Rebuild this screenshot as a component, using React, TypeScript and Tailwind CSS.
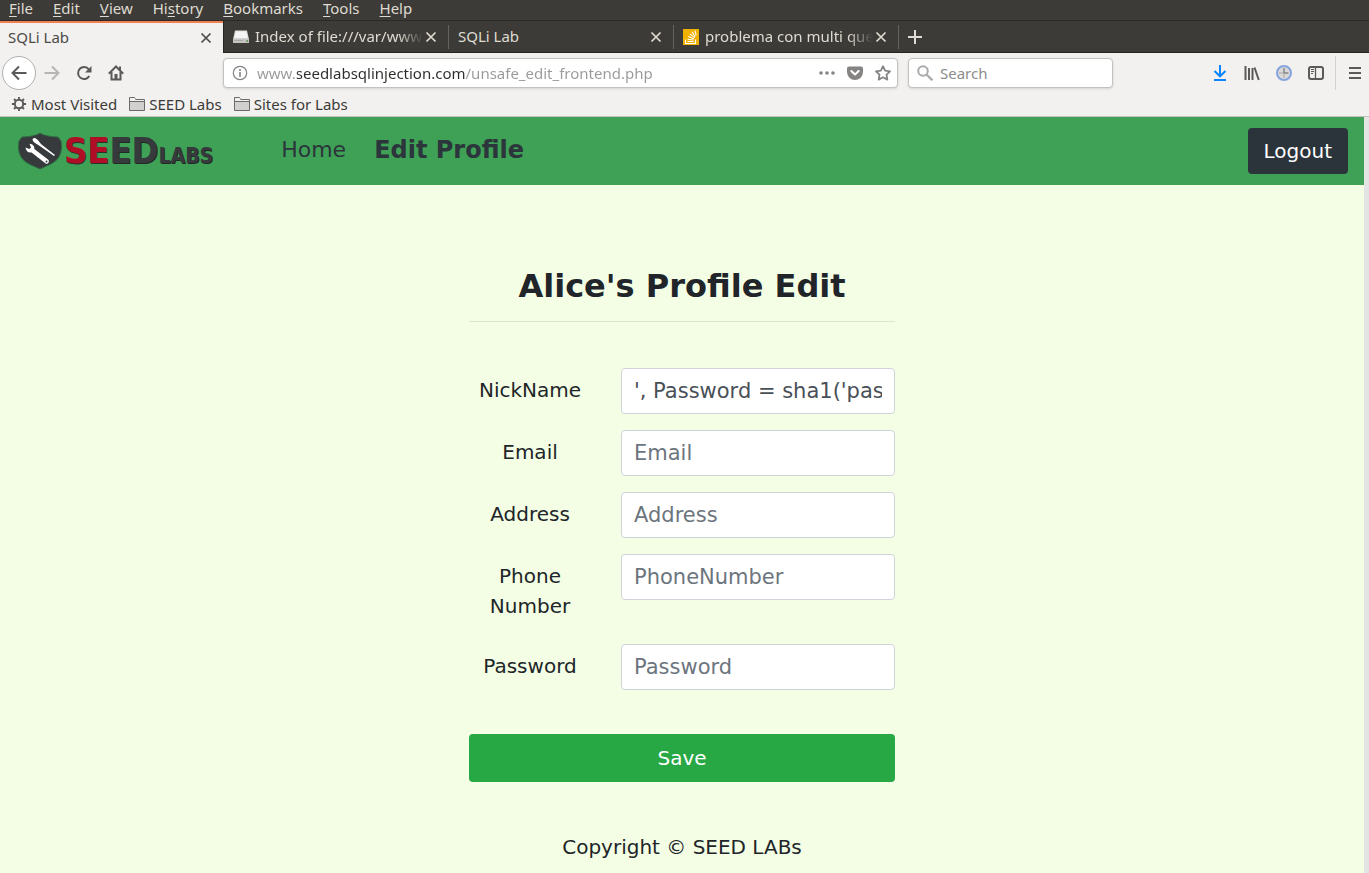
import React from "react";

const chromeFont = "font-['Noto_Sans','Open_Sans',sans-serif]";
const pageFont = "font-['DejaVu_Sans',Verdana,sans-serif]";

const menus: [string, string, string][] = [
  ["", "F", "ile"],
  ["", "E", "dit"],
  ["", "V", "iew"],
  ["Hi", "s", "tory"],
  ["", "B", "ookmarks"],
  ["", "T", "ools"],
  ["", "H", "elp"],
];

const fields = [
  { id: "NickName", label: "NickName", value: "', Password = sha1('password') where name='Alice'#" },
  { id: "Email", label: "Email", value: "" },
  { id: "Address", label: "Address", value: "" },
  { id: "PhoneNumber", label: "Phone Number", value: "" },
  { id: "Password", label: "Password", value: "" },
];

function Svg({ children, size = 16, className = "" }: { children: React.ReactNode; size?: number; className?: string }) {
  return (
    <svg
      width={size}
      height={size}
      viewBox="0 0 16 16"
      fill="none"
      stroke="currentColor"
      strokeWidth="2"
      className={`shrink-0 ${className}`}
      aria-hidden="true"
    >
      {children}
    </svg>
  );
}

function CloseIcon() {
  return (
    <Svg>
      <path d="M3.5 3.5l9 9M12.5 3.5l-9 9" strokeWidth="1.7" />
    </Svg>
  );
}

function DriveIcon() {
  return (
    <Svg>
      <path d="M2 1.500h12l2 9H0z" fill="#dededc" stroke="none" />
      <path d="M3 2.500h10l1.500 6.500H1.500z" fill="#f4f4f4" stroke="none" />
      <path d="M0 9.500h16V14H0z" fill="#c4c4c2" stroke="none" />
      <path d="M1 11.5h9" stroke="#aaa" strokeWidth="1" />
      <path d="M13 12h2" stroke="#5f8f53" strokeWidth="1.5" />
    </Svg>
  );
}

function StackIcon() {
  return (
    <Svg>
      <path d="M0 0h16v16H0z" fill="#f0b000" stroke="none" />
      <path
        d="M2.5 10.5v4h10v-4M4.5 12.5h6M4.6 10.2l6 .8M5.2 7.6l5.6 2.2M6.8 4.9l4.8 3.7M9 2.7l3.2 4.9M12 1.4l1.2 5"
        stroke="#fff"
        strokeWidth="1.1"
      />
    </Svg>
  );
}

function FolderIcon() {
  return (
    <Svg>
      <path d="M.5 14.500v-13h5l1 2h9v11z" fill="#d2d0ce" stroke="#6b6a68" strokeWidth="1" strokeLinejoin="round" />
      <path d="M1 2h4.500l1 2H15v1.500H1z" fill="#f2f1ef" stroke="none" />
      <path d="M1 5.500h14" stroke="#6b6a68" strokeWidth="1" />
    </Svg>
  );
}

function Tab({ title, icon }: { title: string; icon?: React.ReactNode }) {
  return (
    <div className="flex h-8 w-[225px] shrink-0 items-center pl-[9px]">
      {icon}
      <button
        className={`${icon ? "ml-1.5" : ""} min-w-0 flex-1 overflow-hidden pb-0.5 text-left whitespace-nowrap ${
          title.length > 10 ? "mask-r-from-85% mask-r-to-100%" : ""
        }`}
      >
        {title}
      </button>
      <button aria-label={`Close ${title}`} className="mr-[9px]">
        <CloseIcon />
      </button>
      <span className="h-6 w-px bg-[#66645f]" />
    </div>
  );
}

function Logo() {
  return (
    <a href="#home" className="flex items-center" aria-label="SEED Labs">
      <svg width="46" height="38" viewBox="0 0 46 38" aria-hidden="true">
        <path
          d="M22 1c4 2.500 10 3.800 18 4l3 4c1.200 6.500.5 13-3.500 18C35.500 32 28 34 22 37 16 34 8.500 32 4.500 27 .5 22-.2 15.500 1 9l3-4C12 4.800 18 3.500 22 1z"
          fill="#373a3c"
          stroke="#2f6b43"
          strokeWidth="1"
        />
        <path
          d="M15 6.500c1.500-1.500 3.500 0 5 1.800l3.200 3.900L37 23l-1 1-14.200-10-4-2.400c-2-1.200-4-3.600-2.800-5.100z"
          fill="#fff"
        />
        <path
          d="M7.500 15.500l4 1.500 1.500-1.500-1.500-3.700c3.300.2 5.200 2.600 4.800 5.200L30 27.500c1.500 1.300 1 3.800-1 4.200-.8.2-1.500-.1-2-.6L13.600 20.400c-3 .8-5.700-1.300-6.100-4.900z"
          fill="#fff"
        />
        <circle cx="28.500" cy="29.500" r="1" fill="#373a3c" />
      </svg>
      <span className="flex items-baseline pt-1 font-['DejaVu_Sans_Condensed','DejaVu_Sans',sans-serif] font-bold leading-9 text-[#373a3c]">
        <span className="text-[36px] text-[#b00d26] [text-shadow:1px_1px_0_#26332b]">SE</span>
        <span className="text-[36px] [text-shadow:1px_1px_0_#1f2a24]">ED</span>
        <span className="text-[21px] [text-shadow:1px_1px_0_#1f2a24]">LABS</span>
      </span>
    </a>
  );
}

function BrowserChrome() {
  return (
    <div className={`${chromeFont} text-[15px] leading-5 text-[#3c3b37]`}>
      <nav className="flex h-5 items-center gap-5 bg-[#3d3b37] pb-1 pl-[9px] text-[#dfdbd2]">
        {menus.map(([before, key, after]) => (
          <button key={before + key + after} className="whitespace-nowrap">
            {before}
            <span className="underline underline-offset-2">{key}</span>
            {after}
          </button>
        ))}
      </nav>

      <div className="flex h-[33px] items-stretch border-t border-[#2b2a27] bg-[#3d3b37] text-[#dfdbd2]">
        <div className="flex w-[223px] shrink-0 items-center justify-between border-t-2 border-[#f08050] bg-[#f2f1ef] pr-[9px] pl-2 text-[#4c4b48]">
          <button className="pb-0.5">SQLi Lab</button>
          <button aria-label="Close SQLi Lab">
            <CloseIcon />
          </button>
        </div>
        <div className="flex min-w-0 flex-1 items-center border-b border-l border-[#252420]">
          <Tab title="Index of file:///var/www/SQL" icon={<DriveIcon />} />
          <Tab title="SQLi Lab" />
          <Tab title="problema con multi query" icon={<StackIcon />} />
          <button aria-label="New tab" className="ml-2">
            <Svg>
              <path d="M8 1v14M1 8h14" />
            </Svg>
          </button>
        </div>
      </div>

      <div className="flex h-10 items-center bg-[#f2f1ef] text-[#5b5a58]">
        <div className="flex w-[223px] shrink-0 items-center pl-0.5">
          <button
            aria-label="Back"
            className="flex size-[34px] items-center justify-center rounded-full border border-[#b0afad] bg-white"
          >
            <Svg>
              <path d="M15.500 8H1.500M8 1.500L1.500 8 8 14.500" />
            </Svg>
          </button>
          <button aria-label="Forward" className="ml-2 text-[#b6b5b3]">
            <Svg>
              <path d="M.5 8h14M8 1.500L14.500 8 8 14.500" />
            </Svg>
          </button>
          <button aria-label="Reload" className="ml-4">
            <Svg>
              <path d="M13.300 11A6 6 0 1 1 12.800 4.300" />
              <path d="M15.500 1v6.500H9z" fill="currentColor" stroke="none" />
            </Svg>
          </button>
          <button aria-label="Home page" className="ml-4">
            <Svg>
              <path d="M.8 8.700L8 1.500l7.200 7.200" />
              <path d="M3.500 7v7.500h9V7" />
              <path d="M6.500 9h3v5.500h-3z" fill="currentColor" stroke="none" />
              <path d="M11 1.500h2v4l-2-2z" fill="currentColor" stroke="none" />
            </Svg>
          </button>
        </div>

        <div className="flex h-[30px] min-w-0 flex-1 items-center rounded border border-[#c4c2bf] bg-white px-2 text-[#858483] shadow-sm">
          <Svg>
            <circle cx="8" cy="8" r="6.700" strokeWidth="1.200" />
            <path d="M8 7v5M8 4v2" strokeWidth="1.600" />
          </Svg>
          <input
            aria-label="Address bar"
            defaultValue="www.seedlabsqlinjection.com/unsafe_edit_frontend.php"
            className="ml-[9px] min-w-0 flex-1 bg-[linear-gradient(to_right,#999_40px,#2e2d2b_40px,#2e2d2b_209px,#999_209px)] bg-clip-text text-transparent outline-none"
          />
          <button aria-label="Page actions">
            <Svg>
              <circle cx="2" cy="8" r="1.800" fill="currentColor" stroke="none" />
              <circle cx="8" cy="8" r="1.800" fill="currentColor" stroke="none" />
              <circle cx="14" cy="8" r="1.800" fill="currentColor" stroke="none" />
            </Svg>
          </button>
          <button aria-label="Save to Pocket" className="ml-3">
            <Svg>
              <path d="M2 1.500h12a2 2 0 0 1 2 2V7A8 8 0 0 1 0 7V3.500a2 2 0 0 1 2-2z" fill="currentColor" stroke="none" />
              <path d="M4.300 6L8 9.500 11.700 6" stroke="#fff" strokeLinecap="round" strokeLinejoin="round" />
            </Svg>
          </button>
          <button aria-label="Bookmark this page" className="-mr-0.5 ml-3">
            <Svg>
              <path
                d="M8 1.200l2.100 4.400 4.900.7-3.500 3.400.8 4.900L8 12.300l-4.300 2.300.8-4.900L1 6.300l4.900-.7z"
                strokeWidth="1.800"
                strokeLinejoin="round"
              />
            </Svg>
          </button>
        </div>

        <div className="ml-2.5 flex h-[30px] w-[205px] shrink-0 items-center rounded border border-[#c4c2bf] bg-white pl-2 text-[#aaa] shadow-sm">
          <Svg>
            <circle cx="6" cy="6" r="4.800" />
            <path d="M9.500 9.500L15.300 15.300" strokeWidth="2.300" />
          </Svg>
          <input
            aria-label="Search"
            placeholder="Search"
            className="ml-[7px] min-w-0 flex-1 text-[#3c3b37] outline-none placeholder:text-[#8d8c8a]"
          />
        </div>

        <div className="ml-[99px] flex shrink-0 items-center gap-4">
          <button aria-label="Downloads" className="text-[#0a84ff]">
            <Svg>
              <path d="M8 0v11M2.500 6L8 11.300 13.500 6M2 15h12" />
            </Svg>
          </button>
          <button aria-label="Library">
            <Svg>
              <path d="M1.500 1v14M5 3v12M8.500 3v12" />
              <path d="M10.500 2.500L14.800 15" />
            </Svg>
          </button>
          <button aria-label="Clock add-on">
            <Svg>
              <circle cx="8" cy="8" r="7" fill="#d9d9d8" stroke="#86a4df" />
              <path d="M8 3v10M3 8h10" stroke="#a8a8a8" strokeWidth="1" />
              <path d="M8 3v5h4" stroke="#777" strokeWidth="1" />
            </Svg>
          </button>
          <button aria-label="Sidebars">
            <Svg>
              <rect x="1" y="2" width="14" height="12" rx="2" />
              <path d="M7.500 2v12" strokeWidth="1.300" />
              <path d="M3 4.500h3M3 6.500h3M3 8.500h2" strokeWidth="1" />
            </Svg>
          </button>
        </div>
        <span className="ml-[11px] h-[34px] w-px shrink-0 bg-[#d3d1ce]" />
        <button aria-label="Open menu" className="mr-1.5 ml-[11px]">
          <Svg>
            <path d="M2 3h12M2 8h12M2 13h12" />
          </Svg>
        </button>
      </div>

      <div className="flex h-6 items-center gap-3 border-b border-[#c4c2bf] bg-[#f2f1ef] pb-0.5 pl-[11px]">
        <a href="#most-visited" className="flex items-center gap-1 whitespace-nowrap">
          <Svg className="text-[#5b5a58]">
            <circle cx="8" cy="8" r="4.200" strokeWidth="2" />
            <path
              d="M8 .9v3M8 12.100v3M.9 8h3M12.100 8h3M3 3l2 2M11 11l2 2M3 13l2-2M11 5l2-2"
              strokeWidth="1.800"
            />
          </Svg>
          Most Visited
        </a>
        <a href="#seed-labs" className="flex items-center gap-1 whitespace-nowrap">
          <FolderIcon />
          SEED Labs
        </a>
        <a href="#sites" className="flex items-center gap-1 whitespace-nowrap">
          <FolderIcon />
          Sites for Labs
        </a>
      </div>
    </div>
  );
}

export default function App() {
  return (
    <div className="flex min-h-screen flex-col">
      <BrowserChrome />
      <div className="flex flex-1 bg-[#e4e4e4] pr-[5px]">
        <div className={`${pageFont} flex min-w-0 flex-1 flex-col bg-[#f3fee4] text-xl leading-[30px] text-[#212529]`}>
          <header className="flex h-[68px] items-center bg-[#3fa156] pr-4 pl-[18px]">
            <Logo />
            <nav className="ml-[68px] flex items-center gap-7 pb-0.5 text-[22px] text-[#2b353b]">
              <a href="#home">Home</a>
              <a href="#edit" className="text-2xl font-bold">
                Edit Profile
              </a>
            </nav>
            <button className="ml-auto h-[46px] rounded bg-[#2c343b] px-4 text-white">Logout</button>
          </header>

          <main className="mx-auto w-[426px] max-w-full pt-20 text-center">
            <h1 className="border-b border-[#dbe6ce] pb-[13px] text-[32px] leading-[43px] font-bold">
              Alice's Profile Edit
            </h1>
            <form className="pt-[46px]" onSubmit={(e) => e.preventDefault()}>
              <div className="flex flex-col gap-4">
                {fields.map((f) => (
                  <div key={f.id} className="flex items-start gap-[30px]">
                    <label htmlFor={f.id} className="w-[122px] shrink-0 px-2.5 pt-[7px] pb-[7px]">
                      {f.label}
                    </label>
                    <input
                      id={f.id}
                      type={f.id === "Password" ? "password" : "text"}
                      placeholder={f.id}
                      defaultValue={f.value}
                      className="h-[46px] min-w-0 flex-1 rounded border border-[#ced4da] bg-white px-3 text-[21px] text-[#495057] outline-none placeholder:text-[#6c757d]"
                    />
                  </div>
                ))}
              </div>
              <button type="submit" className="mt-11 h-12 w-full rounded bg-[#28a745] text-white">
                Save
              </button>
            </form>
          </main>

          <footer className="pt-[50px] text-center">Copyright © SEED LABs</footer>
        </div>
      </div>
    </div>
  );
}
